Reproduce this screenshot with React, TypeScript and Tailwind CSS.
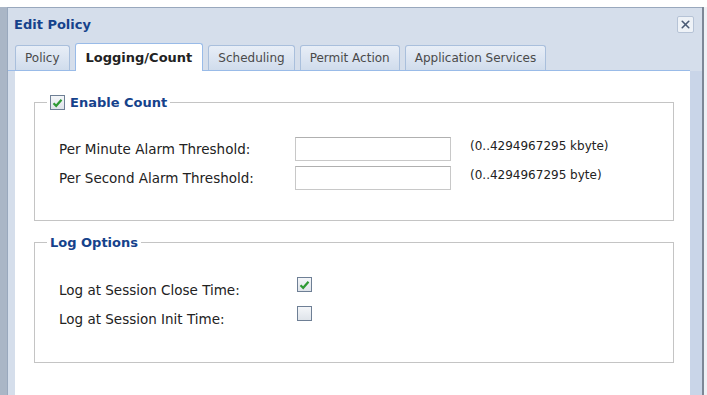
import { X } from 'lucide-react';

const font = { fontFamily: 'Tahoma, "DejaVu Sans", sans-serif' };

function Check({ checked }: { checked: boolean }) {
  return (
    <div className="w-[15px] h-[15px] border border-[#6e7f95] bg-gradient-to-b from-[#f4f6f9] to-[#dfe4ea] flex items-center justify-center">
      {checked && (
        <svg width="11" height="10" viewBox="0 0 11 10">
          <path d="M1.5 5.2 L4.2 7.8 L9.5 1.8" stroke="#2e9a34" strokeWidth="2.2" fill="none" />
        </svg>
      )}
    </div>
  );
}

const tabs = ['Policy', 'Logging/Count', 'Scheduling', 'Permit Action', 'Application Services'];

export default function App() {
  return (
    <div className="w-[707px] h-[395px] bg-white overflow-hidden flex flex-col text-[13.5px]" style={font}>
      <div className="h-[7px] bg-white shrink-0" />
      <div className="flex flex-1 min-h-0">
        <div className="w-[7px] bg-[#aab6c6] shrink-0" />
        <div className="w-[695px] flex flex-col bg-[#d5deeb] border-t border-l border-[#99a8bd]">
          <div className="h-[33px] flex items-center justify-between pl-[6px] pr-[8px] shrink-0">
            <span className="font-bold text-[#15428b] text-[13px]">Edit Policy</span>
            <div className="w-[17px] h-[17px] bg-[#eef2f7] border border-[#b6c3d6] rounded-[2px] flex items-center justify-center">
              <X className="w-[13px] h-[13px] text-[#4a5a74]" strokeWidth={3} />
            </div>
          </div>
          <div className="flex items-end gap-[5px] pl-[7px] h-[30px] shrink-0 border-b border-[#99bbe8] mr-[12px]">
            {tabs.map((t, i) =>
              i === 1 ? (
                <div
                  key={t}
                  className="h-[28px] -mb-px px-[10px] flex items-center bg-white border border-b-0 border-[#99bbe8] rounded-t-[3px] font-bold text-[13px] text-[#222]"
                >
                  {t}
                </div>
              ) : (
                <div
                  key={t}
                  className="h-[25px] px-[9px] flex items-center bg-gradient-to-b from-[#e8eef7] to-[#d0dcec] border border-b-0 border-[#a9bfdc] rounded-t-[3px] text-[12px] text-[#4a4a4a]"
                >
                  {t}
                </div>
              )
            )}
          </div>
          <div className="flex flex-1 min-h-0">
            <div className="w-[7px] shrink-0" />
            <div className="flex-1 bg-white pt-[22px] pl-[19px] pr-[16px]">
              <fieldset className="border border-[#c4c4c4] h-[128px] px-[24px] pb-0">
                <legend className="ml-[-12px] px-[3px] flex items-center gap-[5px] font-bold text-[13px] text-[#15428b]">
                  <Check checked />
                  Enable Count
                </legend>
                <div className="grid grid-cols-[217px_156px_auto] gap-x-[19px] gap-y-[5px] items-center mt-[24px] text-[#222]">
                  <span className="mt-[2px]">Per Minute Alarm Threshold:</span>
                  <div className="h-[24px] border border-[#c8c8c8] border-t-[#b0b0b0]" />
                  <span className="text-[12px] -mt-[6px]">(0..4294967295 kbyte)</span>
                  <span className="mt-[2px]">Per Second Alarm Threshold:</span>
                  <div className="h-[24px] border border-[#c8c8c8] border-t-[#b0b0b0]" />
                  <span className="text-[12px] -mt-[6px]">(0..4294967295 byte)</span>
                </div>
              </fieldset>
              <fieldset className="border border-[#c4c4c4] h-[130px] px-[24px] mt-[12px]">
                <legend className="ml-[-12px] px-[3px] font-bold text-[13px] text-[#15428b]">Log Options</legend>
                <div className="grid grid-cols-[238px_auto] gap-y-[7px] items-center mt-[25px] text-[#222]">
                  <span className="mt-[2px]">Log at Session Close Time:</span>
                  <div className="-mt-[8px]"><Check checked /></div>
                  <span className="mt-[2px]">Log at Session Init Time:</span>
                  <div className="-mt-[8px]"><Check checked={false} /></div>
                </div>
              </fieldset>
            </div>
            <div className="w-[12px] shrink-0 bg-[#c9d5e8]" />
          </div>
        </div>
        <div className="w-[2px] bg-[#7d8796]" />
        <div className="flex-1 bg-[#eef1f5]" />
      </div>
    </div>
  );
}
